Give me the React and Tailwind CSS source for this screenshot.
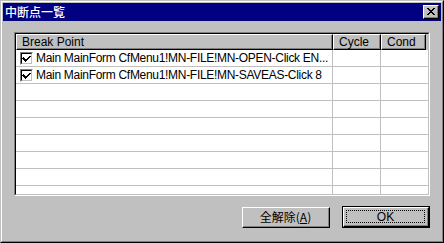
import React from 'react'

const rows = [
  { checked: true, text: 'Main MainForm CfMenu1!MN-FILE!MN-OPEN-Click EN...' },
  { checked: true, text: 'Main MainForm CfMenu1!MN-FILE!MN-SAVEAS-Click 8' },
  {}, {}, {}, {}, {}, {}, {},
]

const font = { fontFamily: '"Liberation Sans", "Noto Sans CJK JP", sans-serif' }

const Check = () => (
  <div className="w-[13px] h-[13px] shrink-0 border-t border-l border-t-[#808080] border-l-[#808080] border-b border-r border-b-white border-r-white">
    <div className="w-full h-full bg-white border-t border-l border-t-black border-l-black border-b border-r border-b-[#c0c0c0] border-r-[#c0c0c0] flex items-center justify-center">
      <svg width="9" height="9" viewBox="0 0 9 9" shapeRendering="crispEdges">
        <path d="M1 3h1v1h1v1h1v1h1v-1h1v-1h1v-1h1v-1h1v1h-1v1h-1v1h-1v1h-1v1h-1v1h-1v-1h-1v-1h-1v-1h-1z" fill="black" />
        <path d="M1 4h1v1h1v1h1v-1h1v-1h1v-1h1v-1h1v1h-1v1h-1v1h-1v1h-1v1h-1v-1h-1v-1h-1z" fill="black" />
      </svg>
    </div>
  </div>
)

const Header = ({ children, className }) => (
  <div className={`h-[16px] border-t border-l border-t-white border-l-white border-b border-r border-b-black border-r-black ${className}`}>
    <div className="h-full border-b border-r border-b-[#808080] border-r-[#808080] flex items-center pl-[5px] text-[12px] leading-none text-black">
      {children}
    </div>
  </div>
)

const App = () => {
  return (
    <div className="w-[444px] h-[243px] bg-[#c0c0c0] select-none" style={font}>
      <div className="w-full h-full border border-t-[#c0c0c0] border-l-[#c0c0c0] border-r-black border-b-black">
        <div className="w-full h-full border border-t-white border-l-white border-r-[#808080] border-b-[#808080] p-px flex flex-col">
          {/* Title bar */}
          <div className="h-[18px] bg-[#000080] flex items-center justify-between pl-[2px] pr-[2px]">
            <span className="text-white text-[12px] font-medium leading-none" style={{ fontFamily: '"Noto Sans CJK JP", sans-serif' }}>中断点一覧</span>
            <div className="w-[16px] h-[14px] bg-[#c0c0c0] border-t border-l border-t-white border-l-white border-b border-r border-b-black border-r-black">
              <div className="w-full h-full border-b border-r border-b-[#808080] border-r-[#808080] flex items-center justify-center">
                <svg width="8" height="7" viewBox="0 0 8 7" shapeRendering="crispEdges">
                  <path d="M0 0h2v1h1v1h2v-1h1v-1h2v1h-1v1h-1v1h-1v1h1v1h1v1h1v1h-2v-1h-1v-1h-2v1h-1v1h-2v-1h1v-1h1v-1h1v-1h-1v-1h-1v-1h-1z" fill="black" />
                </svg>
              </div>
            </div>
          </div>

          {/* Body */}
          <div className="flex-1 flex flex-col px-[11px] pt-[11px]">
            {/* List view */}
            <div className="h-[164px] border-t border-l border-t-[#808080] border-l-[#808080] border-b border-r border-b-white border-r-white">
              <div className="w-full h-full bg-white border-t border-l border-t-black border-l-black border-b border-r border-b-[#c0c0c0] border-r-[#c0c0c0] overflow-hidden flex flex-col">
                <div className="flex shrink-0 bg-[#c0c0c0]">
                  <Header className="w-[317px]">Break Point</Header>
                  <Header className="w-[48px]">Cycle</Header>
                  <Header className="w-[45px]">Cond</Header>
                </div>
                {rows.map((r, i) => (
                  <div key={i} className="flex shrink-0 h-[17px] border-b border-b-[#c0c0c0]">
                    <div className="w-[317px] border-r border-r-[#c0c0c0] flex items-center pl-[4px] gap-[2px] text-[12px] leading-none text-black whitespace-nowrap overflow-hidden">
                      {r.text && (
                        <>
                          <Check />
                          <span className="ml-[1px] tracking-[-0.3px]">{r.text}</span>
                        </>
                      )}
                    </div>
                    <div className="w-[48px] border-r border-r-[#c0c0c0]" />
                    <div className="w-[45px]" />
                  </div>
                ))}
              </div>
            </div>

            {/* Buttons */}
            <div className="flex justify-end gap-[12px] mt-[11px]">
              <div className="w-[88px] h-[21px] border-t border-l border-t-white border-l-white border-b border-r border-b-black border-r-black">
                <div className="w-full h-full border-b border-r border-b-[#808080] border-r-[#808080] flex items-center justify-center text-[12px] leading-none text-black" style={{ fontFamily: '"Noto Sans CJK JP", sans-serif' }}>
                  全解除(<span className="underline underline-offset-[1px]">A</span>)
                </div>
              </div>
              <div className="w-[88px] h-[22px] border border-black -mt-px">
                <div className="w-full h-full border-t border-l border-t-white border-l-white border-b border-r border-b-black border-r-black">
                  <div className="w-full h-full border-b border-r border-b-[#808080] border-r-[#808080] p-[2px]">
                    <div className="w-full h-full border border-dotted border-black flex items-center justify-center text-[12px] leading-none text-black">
                      OK
                    </div>
                  </div>
                </div>
              </div>
            </div>
          </div>
        </div>
      </div>
    </div>
  )
}

export default App
